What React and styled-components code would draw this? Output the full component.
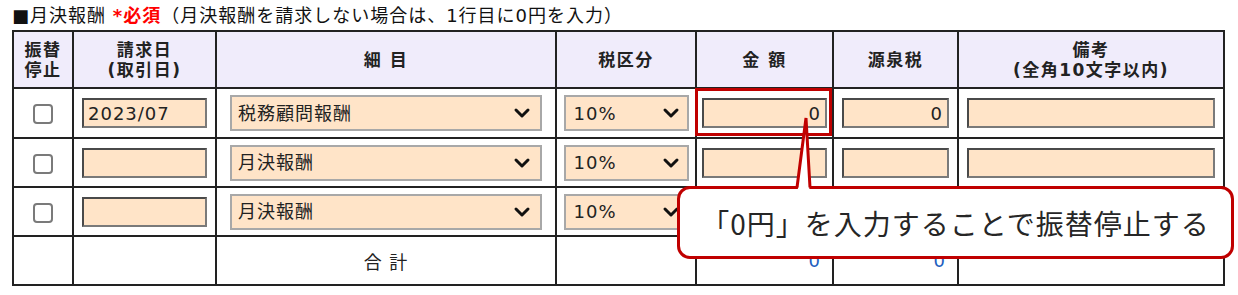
import React from 'react';
import styled, { createGlobalStyle } from 'styled-components';
import { ChevronDown } from 'lucide-react';

const Global = createGlobalStyle`
  html, body { margin: 0; padding: 0; background: #fff; }
  body {
    font-family: "DejaVu Sans", "Noto Sans CJK JP", sans-serif;
    color: #222;
  }
  * { box-sizing: border-box; }
`;

const Page = styled.div`
  position: relative;
  width: 1238px;
  height: 295px;
  padding: 3px 0 0 12px;
  overflow: hidden;
`;

const Title = styled.div`
  font-size: 18px;
  line-height: 26px;
  height: 27px;
  letter-spacing: 1px;
  color: #111;
  white-space: nowrap;
`;

const Required = styled.span`
  color: #f00;
  font-weight: bold;
`;

const Table = styled.table`
  border-collapse: separate;
  border-spacing: 0;
  table-layout: fixed;
  width: 1213px;
  border-left: 2px solid #222;
  border-top: 2px solid #222;
`;

const Col = styled.col`
  width: ${(p) => p.$w}px;
`;

const Row = styled.tr`
  height: ${(p) => p.$h}px;
`;

const Th = styled.th`
  background: #f0ecfb;
  border-right: 2px solid #222;
  border-bottom: 2px solid #222;
  font-family: "DejaVu Sans", "Noto Sans CJK JP", sans-serif;
  font-size: 17px;
  font-weight: bold;
  letter-spacing: 1.5px;
  line-height: 20px;
  color: #222;
  text-align: center;
  vertical-align: middle;
  padding: 0;
`;

const Td = styled.td`
  position: relative;
  border-right: 2px solid #222;
  border-bottom: 2px solid #222;
  padding: 0 ${(p) => (p.$right ? '12px' : '0')} 0 0;
  text-align: ${(p) => (p.$right ? 'right' : 'center')};
  vertical-align: middle;
  font-size: 18px;
  letter-spacing: 1px;

  ${(p) =>
    p.$highlight &&
    `
    &::after {
      content: "";
      position: absolute;
      left: -2px;
      top: -1px;
      right: 0;
      bottom: 1px;
      border: 3px solid #c00000;
      pointer-events: none;
    }
  `}
`;

const Total = styled.span`
  color: ${(p) => (p.$blue ? '#1f5fc0' : '#222')};
  font-size: 18px;
  letter-spacing: ${(p) => (p.$blue ? '0' : '1px')};
  white-space: pre;
`;

const Check = styled.input.attrs({ type: 'checkbox' })`
  appearance: none;
  width: 20px;
  height: 20px;
  margin: 0;
  border: 2px solid #7a7a7a;
  border-radius: 4px;
  background: #fff;
  vertical-align: middle;
`;

const TextInput = styled.input`
  width: ${(p) => p.$w}px;
  height: 30px;
  margin: 0;
  padding: 0 ${(p) => (p.$right ? '4px' : '3px')} 0 4px;
  border: 2px solid;
  border-color: #4a4a4a #7a7a7a #7a7a7a #4a4a4a;
  background: #ffe4c8;
  font-family: "DejaVu Sans", "Noto Sans CJK JP", sans-serif;
  font-size: 18px;
  letter-spacing: 1px;
  color: #222;
  text-align: ${(p) => (p.$right ? 'right' : 'left')};
  vertical-align: middle;
  outline: none;
`;

const SelectWrap = styled.span`
  position: relative;
  display: inline-block;
  width: ${(p) => p.$w}px;
  height: 36px;
  vertical-align: middle;

  svg {
    position: absolute;
    right: ${(p) => p.$icon}px;
    top: 6px;
    pointer-events: none;
    color: #111;
  }
`;

const Select = styled.select`
  appearance: none;
  width: 100%;
  height: 100%;
  margin: 0;
  padding: 0 0 0 ${(p) => p.$pad}px;
  border: 2px solid #a8a8a8;
  border-radius: 0;
  background: #ffe4c8;
  font-family: "DejaVu Sans", "Noto Sans CJK JP", sans-serif;
  font-size: 18px;
  letter-spacing: 1px;
  color: #222;
  outline: none;
`;

const CalloutBox = styled.div`
  position: absolute;
  left: 677px;
  top: 186px;
  width: 557px;
  height: 73px;
  border: 3px solid #c00000;
  border-radius: 13px;
  background: #fff;
  display: flex;
  align-items: center;
  justify-content: center;
  font-family: "Noto Sans CJK JP", sans-serif;
  font-size: 28px;
  letter-spacing: 1px;
  color: #262626;
  white-space: nowrap;
`;

const Pointer = styled.svg`
  position: absolute;
  left: 115px;
  top: -73px;
  overflow: visible;
`;

const columns = [60, 143, 340, 140, 137, 125, 266];

const rows = [
  { date: '2023/07', item: '税務顧問報酬', tax: '10%', amount: '0', withholding: '0' },
  { date: '', item: '月決報酬', tax: '10%', amount: '', withholding: '' },
  { date: '', item: '月決報酬', tax: '10%', amount: '', withholding: '' },
];

const rowHeights = [50, 49, 49];

function Dropdown({ w, pad, icon, value, options }) {
  return (
    <SelectWrap $w={w} $icon={icon}>
      <Select $pad={pad} defaultValue={value}>
        {options.map((o) => (
          <option key={o}>{o}</option>
        ))}
      </Select>
      <ChevronDown size={24} strokeWidth={3} />
    </SelectWrap>
  );
}

export default function App() {
  return (
    <Page>
      <Global />
      <Title>
        ■月決報酬 <Required>*必須</Required>（月決報酬を請求しない場合は、1行目に0円を入力）
      </Title>
      <Table>
        <colgroup>
          {columns.map((w, i) => (
            <Col key={i} $w={w} />
          ))}
        </colgroup>
        <thead>
          <Row $h={57}>
            <Th>振替<br />停止</Th>
            <Th>請求日<br />(取引日)</Th>
            <Th>細 目</Th>
            <Th>税区分</Th>
            <Th>金 額</Th>
            <Th>源泉税</Th>
            <Th>備考<br />(全角10文字以内)</Th>
          </Row>
        </thead>
        <tbody>
          {rows.map((r, i) => (
            <Row key={i} $h={rowHeights[i]}>
              <Td><Check /></Td>
              <Td><TextInput $w={125} defaultValue={r.date} /></Td>
              <Td>
                <Dropdown w={312} pad={6} icon={8} value={r.item} options={['税務顧問報酬', '月決報酬']} />
              </Td>
              <Td>
                <Dropdown w={125} pad={8} icon={6} value={r.tax} options={['10%', '8%', '0%']} />
              </Td>
              <Td $highlight={i === 0}>
                <TextInput $w={125} $right defaultValue={r.amount} />
              </Td>
              <Td><TextInput $w={107} $right defaultValue={r.withholding} /></Td>
              <Td><TextInput $w={248} defaultValue="" /></Td>
            </Row>
          ))}
          <Row $h={49}>
            <Td />
            <Td />
            <Td><Total>合 計</Total></Td>
            <Td />
            <Td $right><Total $blue>0</Total></Td>
            <Td $right><Total $blue>0</Total></Td>
            <Td />
          </Row>
        </tbody>
      </Table>
      <CalloutBox>
        <Pointer width="18" height="76" viewBox="0 0 18 76">
          <polygon points="2.5,76 11,2 14.5,76" fill="#fff" />
          <polyline
            points="2,71.5 11,2 15,71.5"
            fill="none"
            stroke="#c00000"
            strokeWidth="3"
            strokeLinejoin="miter"
          />
        </Pointer>
        「0円」を入力することで振替停止する
      </CalloutBox>
    </Page>
  );
}
